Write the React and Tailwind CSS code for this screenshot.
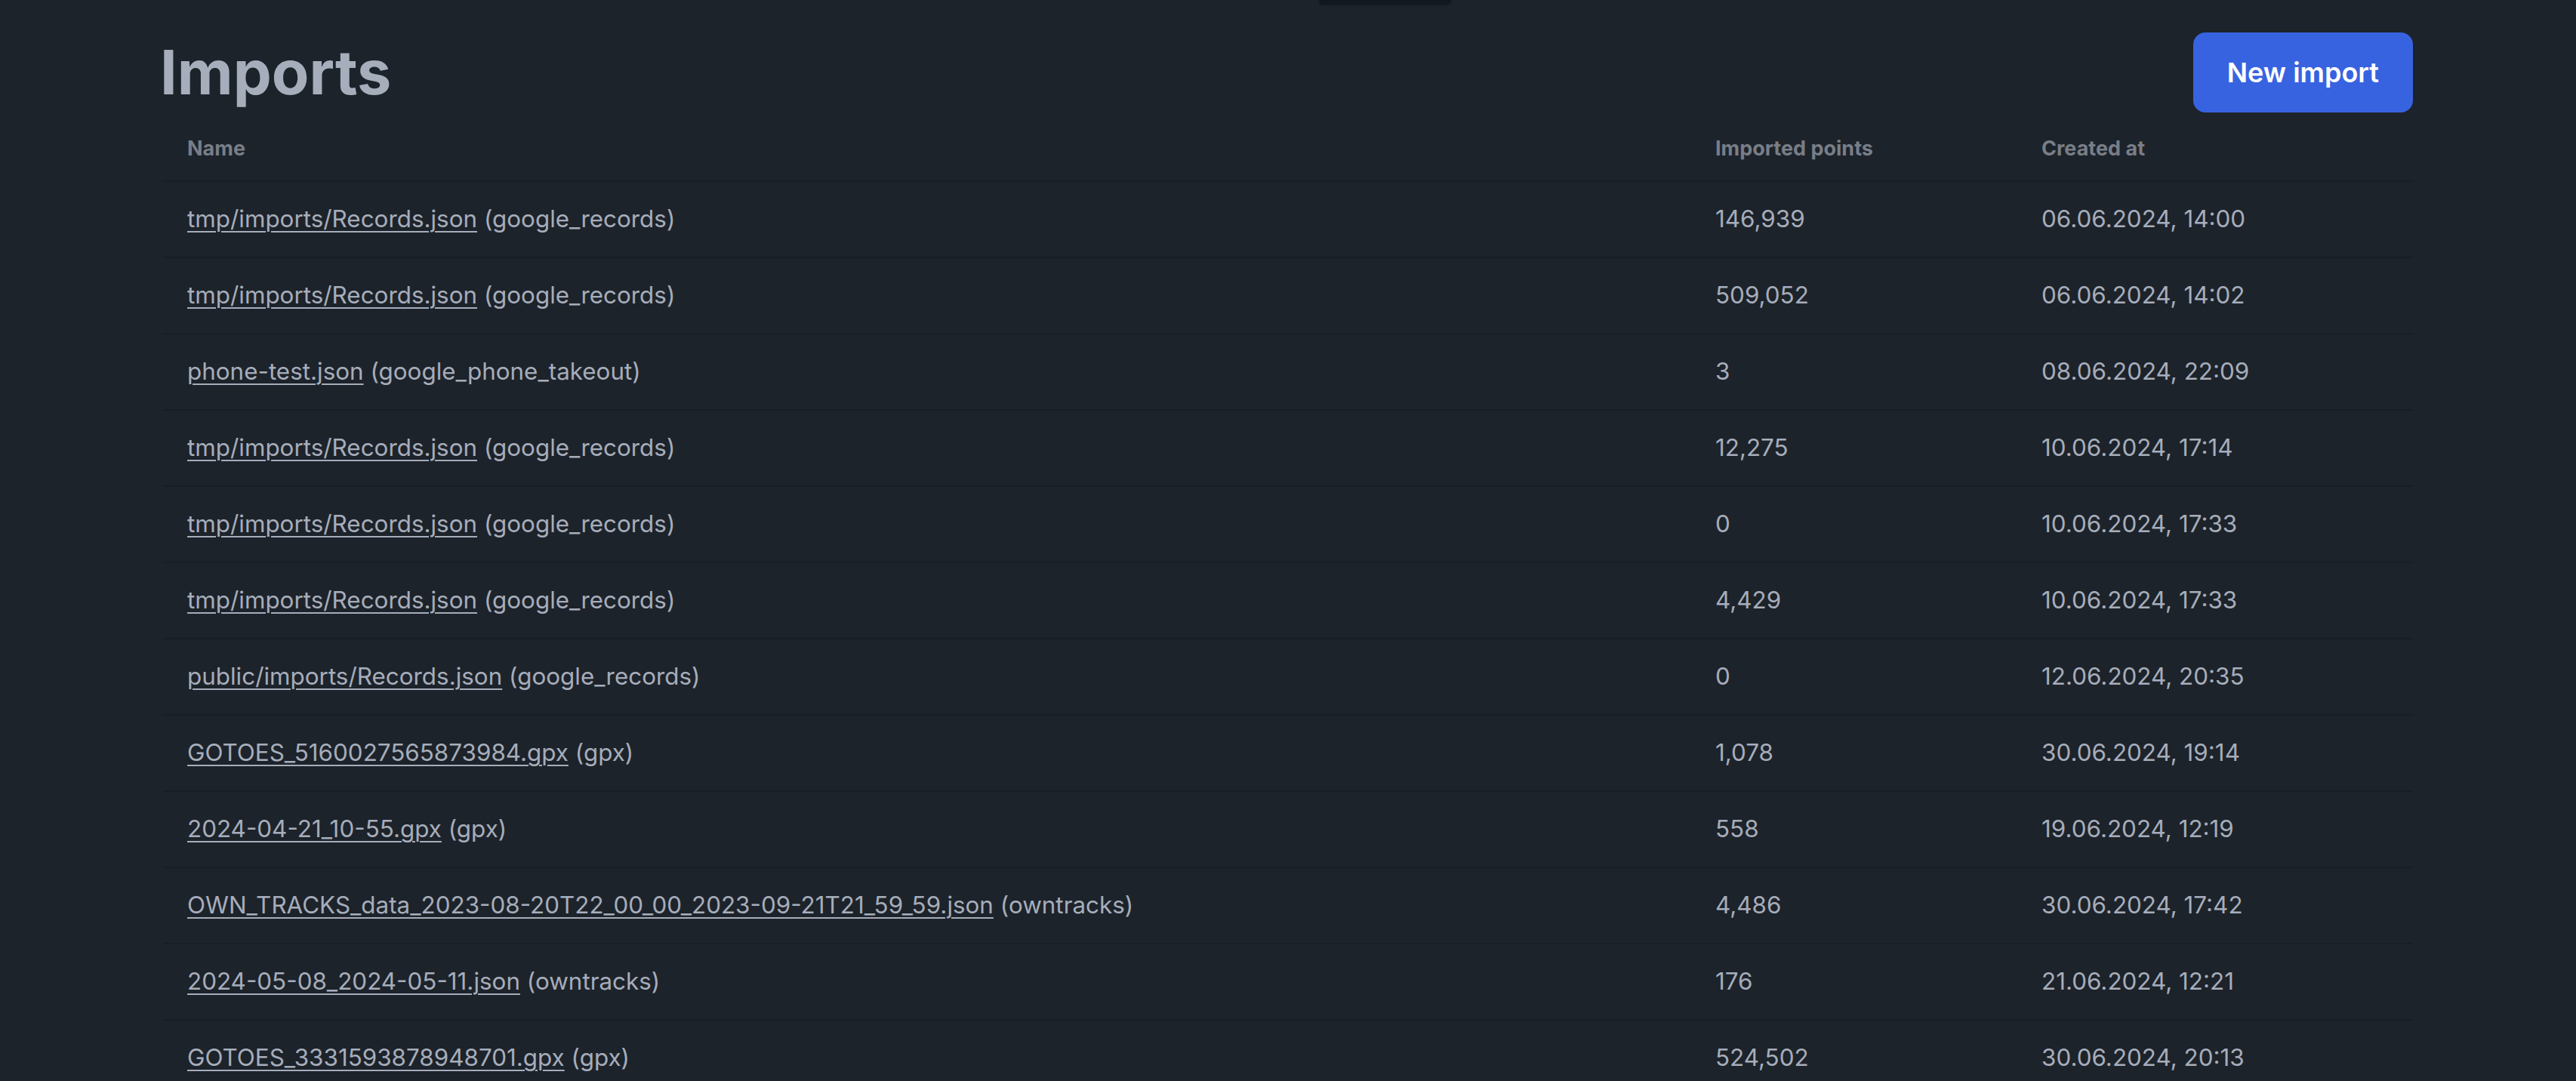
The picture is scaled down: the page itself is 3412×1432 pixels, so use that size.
import React from 'react';

const imports = [
    { name: 'tmp/imports/Records.json', source: 'google_records', points: '146,939', created: '06.06.2024, 14:00' },
    { name: 'tmp/imports/Records.json', source: 'google_records', points: '509,052', created: '06.06.2024, 14:02' },
    { name: 'phone-test.json', source: 'google_phone_takeout', points: '3', created: '08.06.2024, 22:09' },
    { name: 'tmp/imports/Records.json', source: 'google_records', points: '12,275', created: '10.06.2024, 17:14' },
    { name: 'tmp/imports/Records.json', source: 'google_records', points: '0', created: '10.06.2024, 17:33' },
    { name: 'tmp/imports/Records.json', source: 'google_records', points: '4,429', created: '10.06.2024, 17:33' },
    { name: 'public/imports/Records.json', source: 'google_records', points: '0', created: '12.06.2024, 20:35' },
    { name: 'GOTOES_5160027565873984.gpx', source: 'gpx', points: '1,078', created: '30.06.2024, 19:14' },
    { name: '2024-04-21_10-55.gpx', source: 'gpx', points: '558', created: '19.06.2024, 12:19' },
    { name: 'OWN_TRACKS_data_2023-08-20T22_00_00_2023-09-21T21_59_59.json', source: 'owntracks', points: '4,486', created: '30.06.2024, 17:42' },
    { name: '2024-05-08_2024-05-11.json', source: 'owntracks', points: '176', created: '21.06.2024, 12:21' },
    { name: 'GOTOES_3331593878948701.gpx', source: 'gpx', points: '524,502', created: '30.06.2024, 20:13' },
];

export default function App() {
    return (
        <div className="min-h-screen bg-[#1d232a] text-[#a6adbb] font-['Inter','Noto_Sans',sans-serif] overflow-hidden">
            {/* bottom edge of the navbar dropdown, scrolled off */}
            <div className="flex justify-center">
                <div className="w-[175px] h-[5px] ml-[257px] bg-[#121820] rounded-b-[12px] shadow-[0_1px_3px_rgba(0,0,0,0.5)]" />
            </div>

            <div className="w-[2980px] mx-auto pt-[38px]">
                {/* Page header */}
                <div className="flex items-center justify-between h-[106px] mb-[4px]">
                    <h1 className="ml-[-4px] text-[81px] leading-[88px] font-bold text-[#a6adbb]">Imports</h1>
                    <button className="h-[106px] px-[45px] rounded-[16px] bg-[#3863e0] text-white text-[36px] font-semibold">
                        New import
                    </button>
                </div>

                {/* Table */}
                <div className="grid grid-cols-[2024px_432px_524px] text-[27px] leading-[35px] font-bold text-[#787e88] border-b-2 border-[#191e24]">
                    <div className="px-[32px] pt-[26px] pb-[25px]">Name</div>
                    <div className="px-[32px] pt-[26px] pb-[25px]">Imported points</div>
                    <div className="px-[32px] pt-[26px] pb-[25px]">Created at</div>
                </div>

                {imports.map((item, i) => (
                    <div
                        key={i}
                        className="grid grid-cols-[2024px_432px_524px] text-[31.4px] leading-[43px] border-b-2 border-[#191e24]"
                    >
                        <div className="px-[32px] py-[28px] whitespace-nowrap">
                            <a href="#" className="underline decoration-[2px] underline-offset-[5px]">{item.name}</a>
                            {' '}({item.source})
                        </div>
                        <div className="px-[32px] py-[28px]">{item.points}</div>
                        <div className="px-[32px] py-[28px]">{item.created}</div>
                    </div>
                ))}
            </div>
        </div>
    );
}
